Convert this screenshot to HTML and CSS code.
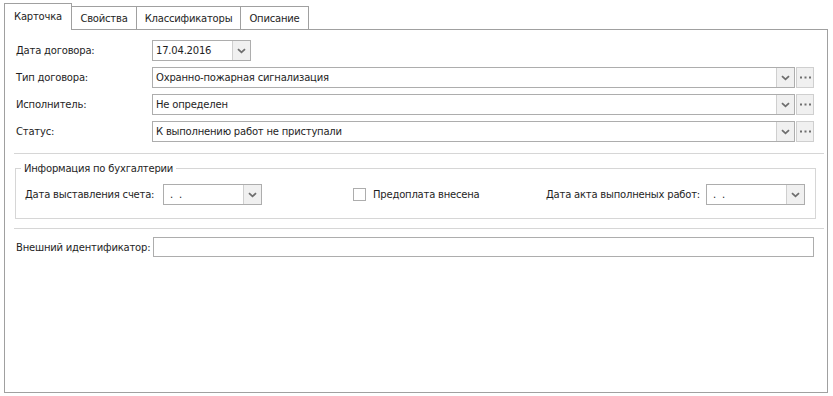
FILE: index.html
```html
<!DOCTYPE html>
<html lang="ru">
<head>
<meta charset="utf-8">
<link rel="stylesheet" href="styles.css">
</head>
<body>
<div class="window">
  <div class="tabs">
    <div class="tab active">Карточка</div>
    <div class="tab">Свойства</div>
    <div class="tab">Классификаторы</div>
    <div class="tab">Описание</div>
  </div>
  <div class="panel">
    <div class="row">
      <span class="lbl">Дата договора:</span>
      <div class="field date">
        <span class="val">17.04.2016</span>
        <span class="ddbtn"><svg width="9" height="6" viewBox="0 0 9 6"><path d="M1 1.2 L4.5 4.4 L8 1.2" fill="none" stroke="#6e6e6e" stroke-width="1.8"/></svg></span>
      </div>
    </div>
    <div class="row">
      <span class="lbl">Тип договора:</span>
      <div class="field wide">
        <span class="val">Охранно-пожарная сигнализация</span>
        <span class="ddbtn"><svg width="9" height="6" viewBox="0 0 9 6"><path d="M1 1.2 L4.5 4.4 L8 1.2" fill="none" stroke="#6e6e6e" stroke-width="1.8"/></svg></span>
      </div>
      <span class="ellbtn"><svg width="11" height="3" viewBox="0 0 11 3"><rect x="0" y="0.5" width="2" height="2" fill="#6e6e6e"/><rect x="4.5" y="0.5" width="2" height="2" fill="#6e6e6e"/><rect x="9" y="0.5" width="2" height="2" fill="#6e6e6e"/></svg></span>
    </div>
    <div class="row">
      <span class="lbl">Исполнитель:</span>
      <div class="field wide">
        <span class="val">Не определен</span>
        <span class="ddbtn"><svg width="9" height="6" viewBox="0 0 9 6"><path d="M1 1.2 L4.5 4.4 L8 1.2" fill="none" stroke="#6e6e6e" stroke-width="1.8"/></svg></span>
      </div>
      <span class="ellbtn"><svg width="11" height="3" viewBox="0 0 11 3"><rect x="0" y="0.5" width="2" height="2" fill="#6e6e6e"/><rect x="4.5" y="0.5" width="2" height="2" fill="#6e6e6e"/><rect x="9" y="0.5" width="2" height="2" fill="#6e6e6e"/></svg></span>
    </div>
    <div class="row">
      <span class="lbl">Статус:</span>
      <div class="field wide">
        <span class="val">К выполнению работ не приступали</span>
        <span class="ddbtn"><svg width="9" height="6" viewBox="0 0 9 6"><path d="M1 1.2 L4.5 4.4 L8 1.2" fill="none" stroke="#6e6e6e" stroke-width="1.8"/></svg></span>
      </div>
      <span class="ellbtn"><svg width="11" height="3" viewBox="0 0 11 3"><rect x="0" y="0.5" width="2" height="2" fill="#6e6e6e"/><rect x="4.5" y="0.5" width="2" height="2" fill="#6e6e6e"/><rect x="9" y="0.5" width="2" height="2" fill="#6e6e6e"/></svg></span>
    </div>

    <div class="sep"></div>

    <fieldset class="group">
      <legend>Информация по бухгалтерии</legend>
      <div class="grow">
        <span class="glbl">Дата выставления счета:</span>
        <div class="field date">
          <span class="val">&nbsp;.&nbsp;&nbsp;.</span>
          <span class="ddbtn"><svg width="9" height="6" viewBox="0 0 9 6"><path d="M1 1.2 L4.5 4.4 L8 1.2" fill="none" stroke="#6e6e6e" stroke-width="1.8"/></svg></span>
        </div>
        <label class="check"><span class="box"></span>Предоплата внесена</label>
        <span class="glbl right">Дата акта выполненых работ:</span>
        <div class="field date">
          <span class="val">&nbsp;.&nbsp;&nbsp;.</span>
          <span class="ddbtn"><svg width="9" height="6" viewBox="0 0 9 6"><path d="M1 1.2 L4.5 4.4 L8 1.2" fill="none" stroke="#6e6e6e" stroke-width="1.8"/></svg></span>
        </div>
      </div>
    </fieldset>

    <div class="sep sep2"></div>

    <div class="row ext">
      <span class="extlbl">Внешний идентификатор:</span>
      <div class="field full"></div>
    </div>
  </div>
</div>
</body>
</html>
```

FILE: styles.css
```css
html, body {
  margin: 0;
  padding: 0;
  background: #ffffff;
}
body {
  font-family: "DejaVu Sans", Verdana, sans-serif;
  font-size: 10px;
  letter-spacing: -0.2px;
  color: #1e1e1e;
}
.window {
  height: 396px;
  box-sizing: border-box;
  padding: 3px 5px 3px 4px;
  display: flex;
  flex-direction: column;
}
.tabs {
  display: flex;
  align-items: flex-end;
  height: 26px;
  position: relative;
  z-index: 1;
}
.tab {
  height: 23px;
  box-sizing: border-box;
  border: 1px solid #a0a0a0;
  border-left: none;
  border-bottom: none;
  background: #ffffff;
  display: flex;
  align-items: center;
  justify-content: center;
  padding-top: 1px;
  white-space: nowrap;
}
.tab:nth-child(2) { width: 65px; }
.tab:nth-child(3) { width: 104px; }
.tab:nth-child(4) { width: 68px; }
.tab.active {
  width: 68px;
  height: 27px;
  margin-bottom: -1px;
  border-left: 1px solid #a0a0a0;
  padding-top: 0;
  padding-bottom: 2px;
}
.panel {
  flex: 1;
  border: 1px solid #a0a0a0;
  padding: 10px 13px 0 11px;
  display: flex;
  flex-direction: column;
}
.row {
  display: flex;
  align-items: center;
  height: 21px;
  margin-bottom: 6px;
}
.lbl {
  width: 136px;
  flex: none;
  white-space: nowrap;
}
.field {
  height: 100%;
  box-sizing: border-box;
  border: 1px solid #adadad;
  background: #fff;
  display: flex;
  align-items: stretch;
}
.field .val {
  flex: 1;
  display: flex;
  align-items: center;
  padding-left: 3px;
  white-space: pre;
}
.field.date {
  width: 99px;
  flex: none;
}
.field.wide {
  flex: 1;
}
.ddbtn {
  width: 17px;
  flex: none;
  border-left: 1px solid #cfcfcf;
  background: #f0f0f0;
  display: flex;
  align-items: center;
  justify-content: center;
}
.ellbtn {
  width: 18px;
  height: 100%;
  box-sizing: border-box;
  margin-left: 1px;
  border: 1px solid #cfcfcf;
  background: #f0f0f0;
  display: flex;
  align-items: center;
  justify-content: center;
}
.sep {
  height: 1px;
  background: #d6d6d6;
  margin: 5px -10px 0 -2px;
}
.group {
  margin: 9px -2px 0 -1px;
  padding: 10px 10px 13px 9px;
  border: 1px solid #d6d6d6;
  min-width: 0;
}
.group legend {
  padding: 0 3px;
  margin-left: -4px;
}
.grow {
  display: flex;
  align-items: center;
  height: 21px;
  white-space: nowrap;
}
.grow .glbl {
  width: 138px;
  flex: none;
}
.check {
  display: flex;
  align-items: center;
  margin-left: 91px;
}
.check .box {
  width: 11px;
  height: 11px;
  border: 1px solid #adadad;
  margin-right: 7px;
  background: #fff;
}
.grow .glbl.right {
  width: auto;
  margin-left: auto;
  margin-right: 6px;
}
.sep2 {
  margin-top: 9px;
}
.row.ext {
  margin-top: 8px;
  height: 20px;
}
.extlbl {
  flex: none;
  width: 137px;
  white-space: nowrap;
}
.field.full {
  flex: 1;
}
```
